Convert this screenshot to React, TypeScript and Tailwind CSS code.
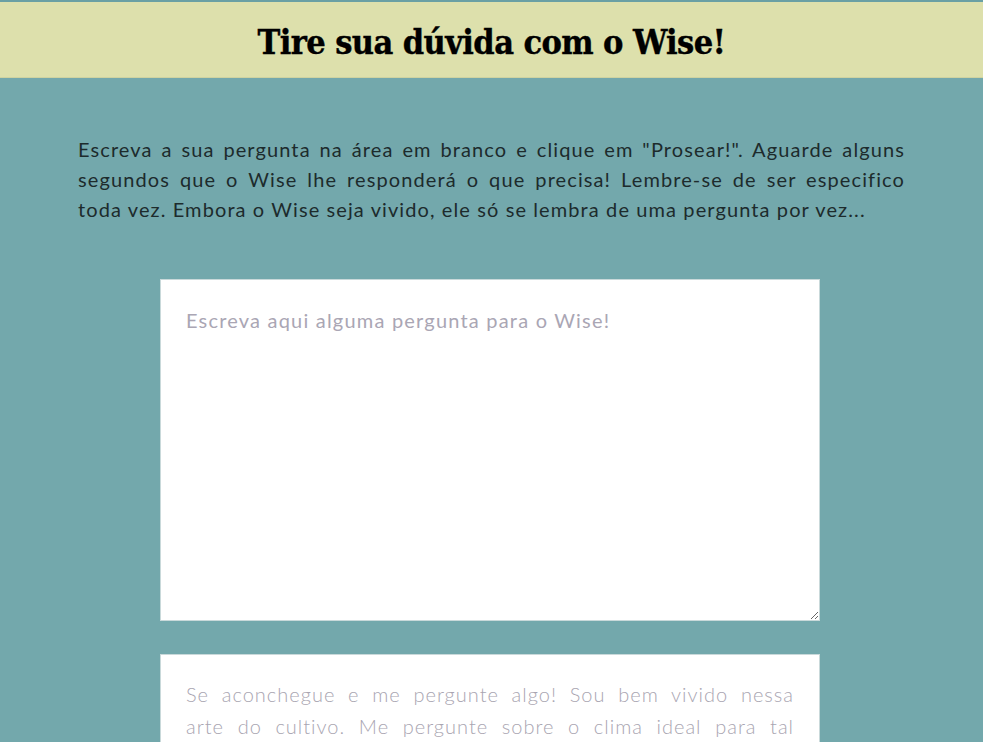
import React from "react";

const body = "font-['Lato','Open_Sans',sans-serif]";

function JLine({ children, last = false }: { children: React.ReactNode; last?: boolean }) {
  return (
    <span className={last ? "block text-left" : "block text-justify [text-align-last:justify]"}>
      {children}
    </span>
  );
}

export default function App() {
  return (
    <div className={`min-h-[742px] bg-[#73a8ac] ${body}`}>
      <div className="h-[2px] bg-[#6aa0a4]" />
      <header className="bg-[#dde0ac] h-[76px] flex items-center justify-center border-b border-[#cfd3a0]">
        <h1 className="font-['DejaVu_Serif',serif] font-black [font-stretch:condensed] text-[34px] tracking-[-0.6px] text-black leading-none pt-[4px] [-webkit-text-stroke:0.4px_black]">
          Tire sua dúvida com o Wise!
        </h1>
      </header>
      <main className="px-[78px] pt-[56px]">
        <p className="text-[20px] leading-[30px] text-[#1d2b2c] font-normal tracking-[1.1px]">
          <JLine>Escreva a sua pergunta na área em branco e clique em "Prosear!". Aguarde alguns</JLine>
          <JLine>segundos que o Wise lhe responderá o que precisa! Lembre-se de ser especifico</JLine>
          <JLine last>toda vez. Embora o Wise seja vivido, ele só se lembra de uma pergunta por vez...</JLine>
        </p>
        <div className="ml-[82px] w-[660px] mt-[55px] flex flex-col gap-[33px]">
          <textarea
            className="block w-full h-[342px] bg-white border border-[#c9d9da] px-[25px] pt-[25px] text-[20px] leading-[30px] tracking-[1.2px] text-[#333] placeholder:text-[#aaa6b4] outline-none font-['Lato',sans-serif]"
            placeholder="Escreva aqui alguma pergunta para o Wise!"
          />
          <div className="bg-white border border-[#c9d9da] px-[25px] pt-[23px] pb-[20px] text-[20px] leading-[32px] tracking-[1px] text-[#a9a5b1] font-light">
            <JLine>Se aconchegue e me pergunte algo! Sou bem vivido nessa</JLine>
            <JLine>arte do cultivo. Me pergunte sobre o clima ideal para tal</JLine>
            <JLine>planta, o melhor tipo de solo, ou como cuidar da sua horta.</JLine>
          </div>
        </div>
      </main>
    </div>
  );
}
